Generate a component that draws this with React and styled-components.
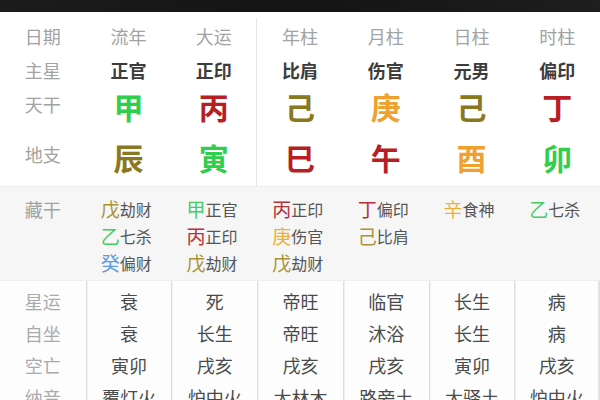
import React from 'react'
import styled, { createGlobalStyle } from 'styled-components'

const GlobalStyle = createGlobalStyle`
  body {
    margin: 0;
    background: #fff;
    font-family: "Noto Sans CJK SC", "Noto Sans", sans-serif;
  }
`

const ELEMENT = {
  wood: '#2fce4b',
  fire: '#b71f25',
  earth: '#8a7820',
  metal: '#eea12e',
  water: '#4a90e2',
}

const SOFT = {
  wood: '#46cc62',
  fire: '#b5323a',
  earth: '#a99336',
  metal: '#ecaf3c',
  water: '#5a9be0',
}

const PILLARS = [
  {
    name: '流年', star: '正官', stem: ['甲', 'wood'], branch: ['辰', 'earth'],
    hidden: [['戊', 'earth', '劫财'], ['乙', 'wood', '七杀'], ['癸', 'water', '偏财']],
    info: ['衰', '衰', '寅卯', '覆灯火'],
  },
  {
    name: '大运', star: '正印', stem: ['丙', 'fire'], branch: ['寅', 'wood'],
    hidden: [['甲', 'wood', '正官'], ['丙', 'fire', '正印'], ['戊', 'earth', '劫财']],
    info: ['死', '长生', '戌亥', '炉中火'],
  },
  {
    name: '年柱', star: '比肩', stem: ['己', 'earth'], branch: ['巳', 'fire'],
    hidden: [['丙', 'fire', '正印'], ['庚', 'metal', '伤官'], ['戊', 'earth', '劫财']],
    info: ['帝旺', '帝旺', '戌亥', '大林木'],
  },
  {
    name: '月柱', star: '伤官', stem: ['庚', 'metal'], branch: ['午', 'fire'],
    hidden: [['丁', 'fire', '偏印'], ['己', 'earth', '比肩']],
    info: ['临官', '沐浴', '戌亥', '路旁土'],
  },
  {
    name: '日柱', star: '元男', stem: ['己', 'earth'], branch: ['酉', 'metal'],
    hidden: [['辛', 'metal', '食神']],
    info: ['长生', '长生', '寅卯', '大驿土'],
  },
  {
    name: '时柱', star: '偏印', stem: ['丁', 'fire'], branch: ['卯', 'wood'],
    hidden: [['乙', 'wood', '七杀']],
    info: ['病', '病', '戌亥', '炉中火'],
  },
]

const INFO_LABELS = ['星运', '自坐', '空亡', '纳音']

const Screen = styled.div`
  width: 600px;
  height: 400px;
  overflow: hidden;
  display: flex;
  flex-direction: column;
  background: #fff;
`

const StatusBar = styled.div`
  height: 12px;
  flex: none;
  background: linear-gradient(90deg, #1c1c1c, #141414 50%, #1e1e1e);
`

const Chart = styled.div`
  display: grid;
  grid-template-columns: repeat(7, 1fr);
  grid-template-rows: 36px 32px 36px 64px;
  padding-top: 6px;
  flex: none;
`

const Cell = styled.div`
  display: flex;
  align-items: center;
  justify-content: center;
  border-right: ${p => (p.$divider ? '1px solid #e6e6e6' : 'none')};
`

const Label = styled.span`
  font-size: 18px;
  color: #a2a2a2;
`

const Star = styled.span`
  font-size: 18px;
  font-weight: 700;
  color: #3c3c3c;
`

const BigChar = styled.span`
  font-size: 30px;
  font-weight: 700;
  line-height: 1;
  padding-top: ${p => p.$drop}px;
  color: ${p => ELEMENT[p.$el]};
`

const Hidden = styled.div`
  display: grid;
  grid-template-columns: repeat(7, 1fr);
  padding: 8px 0 4px;
  background: #f6f6f6;
  border-top: 1px solid #ececec;
  border-bottom: 1px solid #eeeeee;
  flex: none;
`

const HiddenCol = styled.div`
  display: flex;
  flex-direction: column;
  align-items: ${p => (p.$label ? 'center' : 'flex-start')};
  padding-left: ${p => (p.$label ? 0 : 15)}px;
`

const HiddenRow = styled.div`
  height: 27px;
  display: flex;
  align-items: center;
`

const HiddenStem = styled.span`
  font-size: 19px;
  color: ${p => SOFT[p.$el]};
`

const TenGod = styled.span`
  font-size: 16px;
  color: #555;
`

const Info = styled.div`
  display: grid;
  grid-template-columns: repeat(7, 1fr);
  flex: 1;
  background: #fdfdfd;
`

const InfoCol = styled.div`
  display: flex;
  flex-direction: column;
  align-items: center;
  padding-top: 4px;
  border-left: ${p => (p.$label ? 'none' : '1px solid #dedede')};
  box-shadow: ${p => (p.$label ? 'none' : 'inset 1px 0 0 #f1f1f1')};
  border-right: ${p => (p.$last ? '2px solid #e2e2e2' : 'none')};
`

const InfoCell = styled.div`
  height: 32px;
  display: flex;
  align-items: center;
  font-size: 18px;
  color: ${p => (p.$label ? '#aaaaaa' : '#4a4a4a')};
`

export default function App() {
  return (
    <Screen>
      <GlobalStyle />
      <StatusBar />

      <Chart>
        <Cell><Label>日期</Label></Cell>
        {PILLARS.map((p, i) => (
          <Cell key={p.name} $divider={i === 1}><Label>{p.name}</Label></Cell>
        ))}

        <Cell><Label>主星</Label></Cell>
        {PILLARS.map((p, i) => (
          <Cell key={p.name} $divider={i === 1}><Star>{p.star}</Star></Cell>
        ))}

        <Cell><Label>天干</Label></Cell>
        {PILLARS.map((p, i) => (
          <Cell key={p.name} $divider={i === 1}>
            <BigChar $el={p.stem[1]} $drop={3}>{p.stem[0]}</BigChar>
          </Cell>
        ))}

        <Cell><Label>地支</Label></Cell>
        {PILLARS.map((p, i) => (
          <Cell key={p.name} $divider={i === 1}>
            <BigChar $el={p.branch[1]} $drop={6}>{p.branch[0]}</BigChar>
          </Cell>
        ))}
      </Chart>

      <Hidden>
        <HiddenCol $label>
          <HiddenRow><Label>藏干</Label></HiddenRow>
        </HiddenCol>
        {PILLARS.map(p => (
          <HiddenCol key={p.name}>
            {p.hidden.map(([stem, el, god]) => (
              <HiddenRow key={stem + god}>
                <HiddenStem $el={el}>{stem}</HiddenStem>
                <TenGod>{god}</TenGod>
              </HiddenRow>
            ))}
          </HiddenCol>
        ))}
      </Hidden>

      <Info>
        <InfoCol $label>
          {INFO_LABELS.map(l => <InfoCell key={l} $label>{l}</InfoCell>)}
        </InfoCol>
        {PILLARS.map((p, i) => (
          <InfoCol key={p.name} $last={i === PILLARS.length - 1}>
            {p.info.map((v, j) => <InfoCell key={j}>{v}</InfoCell>)}
          </InfoCol>
        ))}
      </Info>
    </Screen>
  )
}
